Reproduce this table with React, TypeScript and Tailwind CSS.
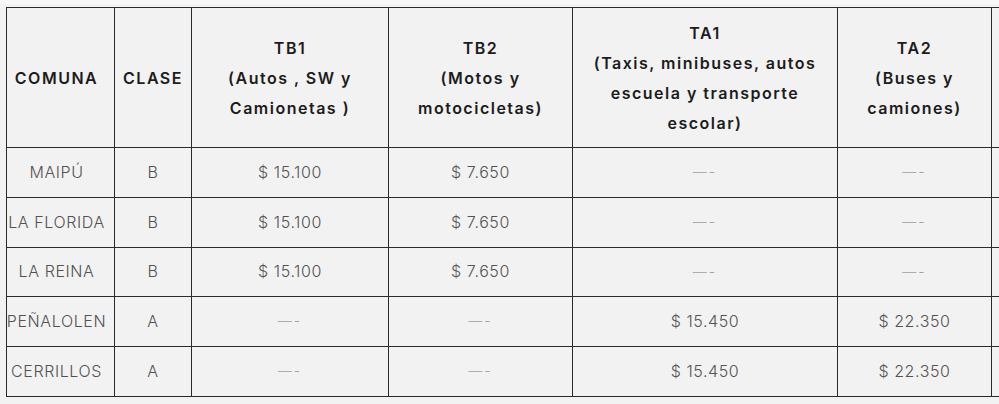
import React from 'react';

const COLS = 'grid-cols-[108px_77px_197px_184px_265px_154px_120px]';

const HEADERS: React.ReactNode[] = [
  'COMUNA',
  'CLASE',
  <>TB1<br />(Autos , SW y<br />Camionetas )</>,
  <>TB2<br />(Motos y<br />motocicletas)</>,
  <>TA1<br />(Taxis, minibuses, autos<br />escuela y transporte<br />escolar)</>,
  <>TA2<br />(Buses y<br />camiones)</>,
  '',
];

const DASH = '—-';

const ROWS = [
  { comuna: 'MAIPÚ', clase: 'B', tb1: '$ 15.100', tb2: '$ 7.650', ta1: DASH, ta2: DASH, h: 'h-[50px]' },
  { comuna: 'LA FLORIDA', clase: 'B', tb1: '$ 15.100', tb2: '$ 7.650', ta1: DASH, ta2: DASH, h: 'h-[50px]' },
  { comuna: 'LA REINA', clase: 'B', tb1: '$ 15.100', tb2: '$ 7.650', ta1: DASH, ta2: DASH, h: 'h-[49px]' },
  { comuna: 'PEÑALOLEN', clase: 'A', tb1: DASH, tb2: DASH, ta1: '$ 15.450', ta2: '$ 22.350', h: 'h-[50px]' },
  { comuna: 'CERRILLOS', clase: 'A', tb1: DASH, tb2: DASH, ta1: '$ 15.450', ta2: '$ 22.350', h: 'h-[50px]' },
];

function Cell({ value, h, first }: { value: string; h: string; first?: boolean }) {
  const isDash = value === DASH;
  return (
    <div
      className={`${h} flex items-center justify-center whitespace-nowrap border-r border-b border-[#2a2a2a] pb-[2px] ${
        first ? 'pr-2' : ''
      } ${isDash ? 'text-[14px] text-[#9c9c9c] tracking-[2px]' : 'text-[#525252] tracking-[0.6px]'}`}
    >
      {value}
    </div>
  );
}

export default function App() {
  return (
    <div
      className="h-[404px] w-[999px] overflow-hidden bg-[#f2f2f2]"
      style={{ fontFamily: 'Inter, "Open Sans", sans-serif' }}
    >
      <div className="h-[4px] bg-[#f7f7f7]" />
      <div className="pl-[6px] pt-[3px]">
        <div className={`grid w-max ${COLS} border-t border-l border-[#2a2a2a]`}>
          {/* Header row */}
          {HEADERS.map((h, i) => (
            <div
              key={i}
              className={`flex h-[140px] items-center justify-center whitespace-nowrap border-r border-b border-[#2a2a2a] text-center text-[16px] font-semibold leading-[30px] tracking-[1.5px] text-[#1c1c1c] ${
                i === 0 ? 'pr-2' : ''
              }`}
            >
              <div>{h}</div>
            </div>
          ))}

          {/* Body rows */}
          {ROWS.map((r) => (
            <div key={r.comuna} className="contents text-[16px] font-light">
              <Cell value={r.comuna} h={r.h} first />
              <Cell value={r.clase} h={r.h} />
              <Cell value={r.tb1} h={r.h} />
              <Cell value={r.tb2} h={r.h} />
              <Cell value={r.ta1} h={r.h} />
              <Cell value={r.ta2} h={r.h} />
              <Cell value="" h={r.h} />
            </div>
          ))}
        </div>
      </div>
    </div>
  );
}
